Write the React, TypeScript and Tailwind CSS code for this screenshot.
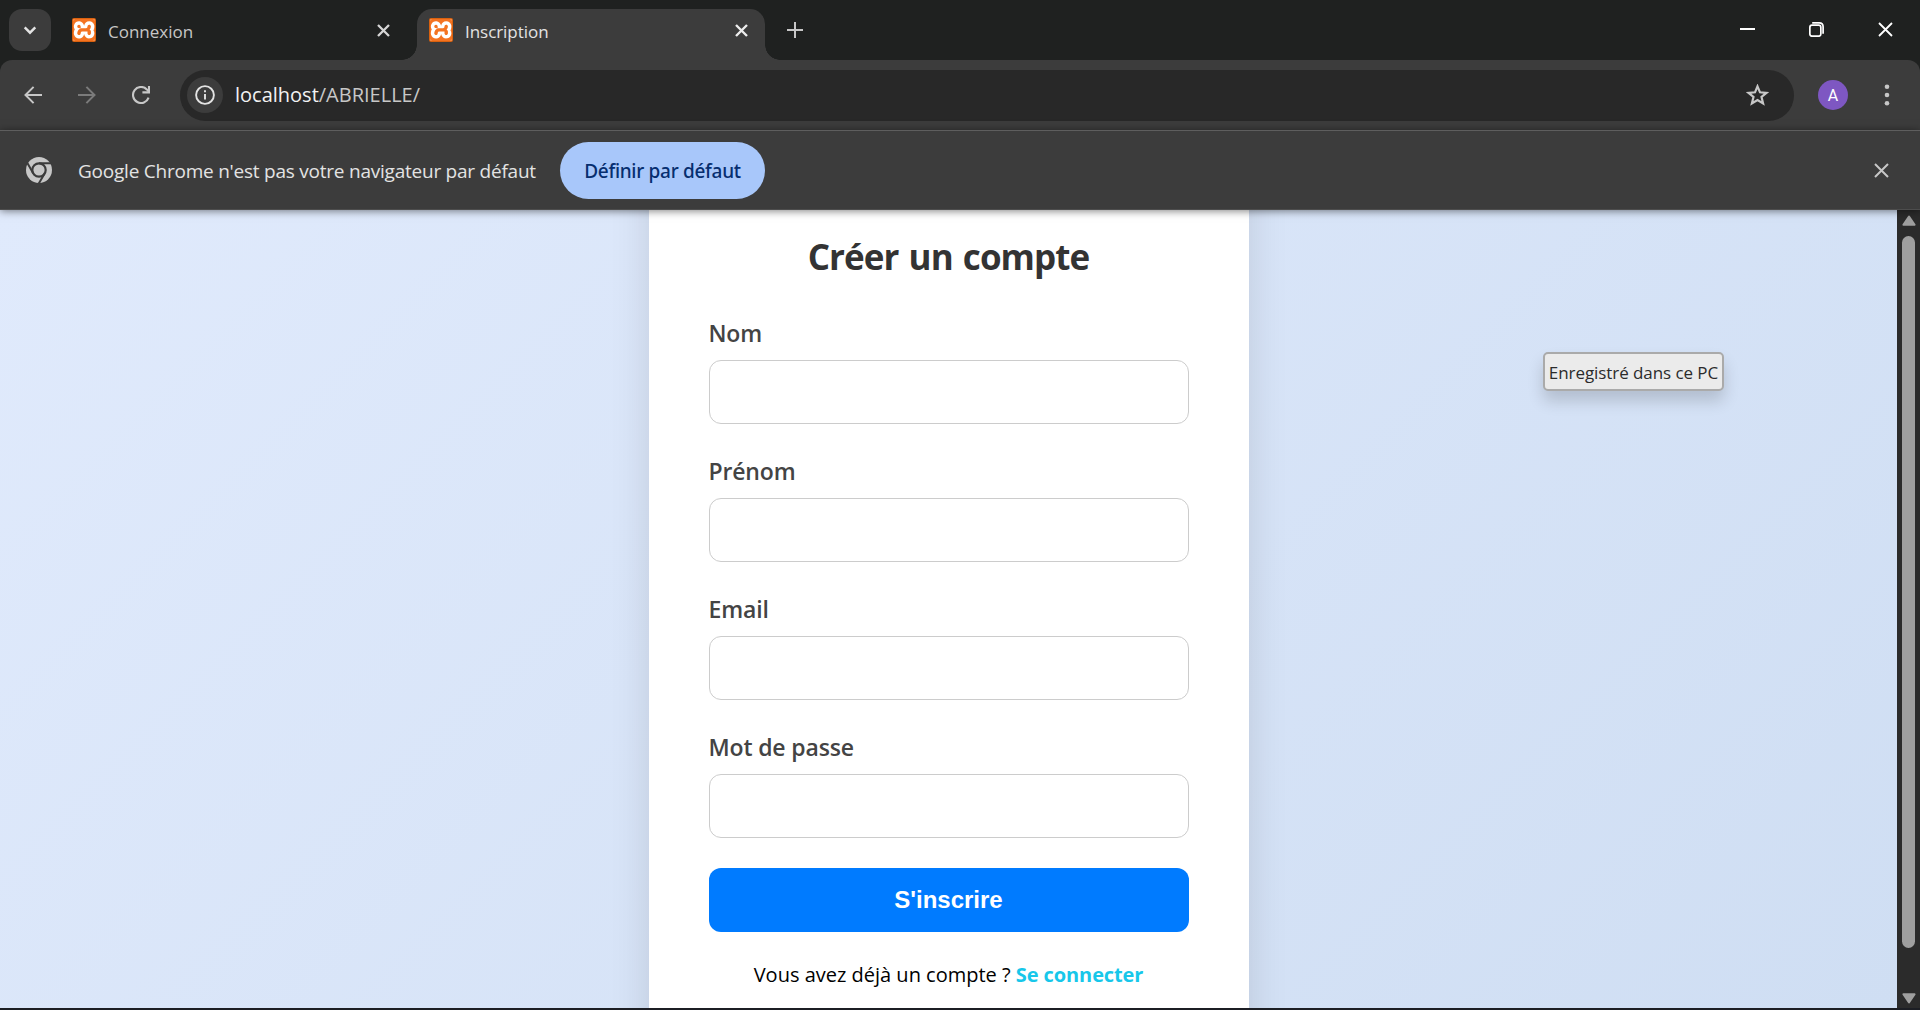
import type { ReactNode } from "react";
import { SiXampp } from "react-icons/si";

function XamppIcon() {
  return (
    <span className="flex size-[24px] shrink-0 items-center justify-center rounded-[2px] bg-[#d9610f] p-px">
      <span className="block size-[22px] overflow-hidden rounded-[2px] bg-white">
        <SiXampp className="block size-[22px] scale-[1.28] text-[#f47321]" />
      </span>
    </span>
  );
}

function Cross({ size, stroke, color }: { size: number; stroke: number; color: string }) {
  return (
    <svg width={size} height={size} viewBox={`0 0 ${size} ${size}`} className="shrink-0">
      <path d={`M1 1L${size - 1} ${size - 1}M${size - 1} 1L1 ${size - 1}`} stroke={color} strokeWidth={stroke} />
    </svg>
  );
}

function ChromeLogo() {
  return (
    <svg width="26" height="26" viewBox="0 0 26 26" className="shrink-0">
      <circle cx="13" cy="13" r="13" fill="#c7c7c7" />
      <circle cx="13" cy="13" r="6.7" fill="none" stroke="#3c3c3c" strokeWidth="2.2" />
      <path d="M13 6.3H25.5M7.2 16.35L1.2 5.8M18.8 16.35L12.6 26.8" stroke="#3c3c3c" strokeWidth="2" />
    </svg>
  );
}

function TabStrip() {
  return (
    <header className="flex h-[60px] bg-[#1f2120]">
      <button className="mt-[9px] ml-[9px] flex size-[42px] items-center justify-center rounded-[13px] bg-[#3c3c3c]">
        <svg width="14" height="9" viewBox="0 0 14 9">
          <path d="M1.7 1.4L7 6.7L12.3 1.4" fill="none" stroke="#e3e3e3" strokeWidth="2.4" />
        </svg>
      </button>
      <div className="ml-[21px] flex h-[60px] w-[330px] items-center pr-[12px]">
        <XamppIcon />
        <span className="mt-[3px] ml-[12px] flex-1 text-[17px] text-[#c7c7c7]">Connexion</span>
        <Cross size={13} stroke={2.3} color="#d6d6d6" />
      </div>
      <div className="flex h-[60px] items-end">
        <div className="size-[15px] bg-[radial-gradient(circle_at_0_0,transparent_14.5px,#3c3c3c_15px)]" />
        <div className="flex h-[51px] w-[348px] items-start rounded-t-[15px] bg-[#3c3c3c] pr-[17px] pl-[12px]">
          <div className="flex h-[42px] flex-1 items-center">
            <XamppIcon />
            <span className="mt-[3px] ml-[12px] flex-1 text-[17px] tracking-[-0.05px] text-[#e3e3e3]">Inscription</span>
            <Cross size={13} stroke={2.4} color="#ececec" />
          </div>
        </div>
        <div className="size-[15px] bg-[radial-gradient(circle_at_100%_0,transparent_14.5px,#3c3c3c_15px)]" />
      </div>
      <div className="ml-[7px] flex h-[60px] items-center">
        <svg width="16" height="16" viewBox="0 0 16 16">
          <path d="M8 0V16M0 8H16" stroke="#c7c7c7" strokeWidth="2" />
        </svg>
      </div>
      <div className="ml-auto flex h-[59px] items-center gap-[54px] pr-[27px]">
        <svg width="15" height="15" viewBox="0 0 15 15">
          <path d="M0 7H15" stroke="#fff" strokeWidth="2" />
        </svg>
        <svg width="15" height="15" viewBox="0 0 15 15" fill="none" stroke="#fff" strokeWidth="1.7">
          <rect x=".85" y="3.2" width="11" height="11" rx="2.2" />
          <path d="M3.2 .9H10.2Q14.1 .9 14.1 4.8V11.8" />
        </svg>
        <Cross size={15} stroke={1.8} color="#fff" />
      </div>
    </header>
  );
}

function Toolbar() {
  return (
    <div className="bg-[#1f2120]">
      <div className="flex h-[70px] items-center rounded-t-[12px] bg-[#3c3c3c] pl-[24px]">
        <svg width="18" height="18" viewBox="0 0 18 18" fill="none" stroke="#c7c7c7" strokeWidth="2">
          <path d="M18 9H1.6M9.6 .9L1.5 9L9.6 17.1" />
        </svg>
        <svg width="18" height="18" viewBox="0 0 18 18" fill="none" stroke="#7b7b7b" strokeWidth="2" className="ml-[36px]">
          <path d="M0 9H16.4M8.4 .9L16.5 9L8.4 17.1" />
        </svg>
        <svg width="18" height="18" viewBox="0 0 18 18" fill="none" stroke="#c7c7c7" strokeWidth="2.1" className="ml-[36px]">
          <path d="M16.6 11.6A8 8 0 1 1 14.8 3.4L16.6 5.4" />
          <path d="M17 0V6.4H10.4" />
        </svg>
        <div className="ml-[30px] flex h-[51px] w-[1614px] items-center rounded-full bg-[#282828] pr-[25px] pl-[7px]">
          <span className="flex size-[36px] items-center justify-center rounded-full bg-[#3c3c3c]">
            <svg width="20" height="20" viewBox="0 0 20 20">
              <circle cx="10" cy="10" r="8.9" fill="none" stroke="#e3e3e3" strokeWidth="1.9" />
              <path d="M10 8.9V14.6M10 5.2V7.2" stroke="#e3e3e3" strokeWidth="1.9" />
            </svg>
          </span>
          <p className="-mt-px ml-[12px] flex-1 text-[20px] leading-[30px] text-[#c7c7c7]">
            <span className="text-[#f2f2f2]">localhost</span>/ABRIELLE/
          </p>
          <svg width="23" height="22" viewBox="0 0 23 22" fill="none" stroke="#c7c7c7" strokeWidth="2.2">
            <path d="M11.5 2.3L14 8.3L20.5 8.8L15.5 13L17.1 19.4L11.5 16L5.9 19.4L7.5 13L2.5 8.8L9 8.3Z" />
          </svg>
        </div>
        <span className="ml-[24px] flex size-[30px] items-center justify-center rounded-full bg-[#7e57c2] pt-px font-['Roboto'] text-[16px] text-white">
          A
        </span>
        <svg width="6" height="24" viewBox="0 0 6 24" fill="#c7c7c7" className="ml-[36px]">
          <circle cx="3" cy="3.7" r="2.3" />
          <circle cx="3" cy="12" r="2.3" />
          <circle cx="3" cy="20.3" r="2.3" />
        </svg>
      </div>
    </div>
  );
}

function DefaultBrowserBar() {
  return (
    <div className="relative z-10 flex h-[80px] items-center border-t border-b border-t-[#5e5e5e] border-b-[#4d4d4d] bg-[#3c3c3c] pr-[31px] pl-[26px] shadow-[0_1px_8px_rgba(0,0,0,0.5)]">
      <ChromeLogo />
      <span className="mt-[2px] ml-[26px] w-[482px] text-[19px] tracking-[-0.23px] whitespace-nowrap text-[#e3e3e3]">
        Google Chrome n'est pas votre navigateur par défaut
      </span>
      <button className="mt-px h-[57px] w-[205px] rounded-full bg-[#a8c7fa] pt-[2px] font-['Noto_Sans'] text-[19px] font-medium tracking-[-0.3px] text-[#062e6f]">
        Définir par défaut
      </button>
      <span className="ml-auto">
        <Cross size={15} stroke={2} color="#c7c7c7" />
      </span>
    </div>
  );
}

function Field({ label, type }: { label: string; type: string }) {
  return (
    <label className="block">
      <span className="block h-[30px] text-[23px] leading-[30px] font-semibold tracking-[-0.15px] text-[#444]">{label}</span>
      <input type={type} className="mt-[12px] block h-[64px] w-full rounded-[12px] border border-[#ccc] bg-white px-[18px]" />
    </label>
  );
}

function SignupCard({ children }: { children: ReactNode }) {
  return (
    <main className="-mt-[60px] h-[918px] w-[600px] bg-white px-[60px] pt-[83px] shadow-[0_12px_38px_rgba(0,0,0,0.12)]">
      {children}
    </main>
  );
}

function Scrollbar() {
  return (
    <div className="flex w-[23px] flex-col items-center bg-[#2b2b2b] pt-[5px] pb-[4px]">
      <svg width="14" height="11" viewBox="0 0 14 11">
        <path d="M7 1.5L12.6 9.7H1.4Z" fill="#9f9f9f" stroke="#9f9f9f" strokeWidth="2" strokeLinejoin="round" />
      </svg>
      <div className="mt-[10px] h-[712px] w-[13px] rounded-full bg-[#9f9f9f]" />
      <svg width="14" height="11" viewBox="0 0 14 11" className="mt-auto">
        <path d="M7 9.5L12.6 1.3H1.4Z" fill="#9f9f9f" stroke="#9f9f9f" strokeWidth="2" strokeLinejoin="round" />
      </svg>
    </div>
  );
}

export default function App() {
  return (
    <div className="flex h-[1010px] w-[1920px] flex-col overflow-hidden bg-[#1c1e24] font-['Open_Sans','Noto_Sans',sans-serif]">
      <TabStrip />
      <Toolbar />
      <DefaultBrowserBar />
      <div className="flex h-[798px]">
        <div className="relative flex w-[1897px] justify-center overflow-hidden bg-[linear-gradient(135deg,#e0eafc,#cfdef3)]">
          <SignupCard>
            <h1 className="text-center text-[35px] leading-[48px] font-bold tracking-[-0.95px] text-[#333] [word-spacing:2px]">
              Créer un compte
            </h1>
            <form className="mt-[37px] flex flex-col gap-[32px]">
              <Field label="Nom" type="text" />
              <Field label="Prénom" type="text" />
              <Field label="Email" type="email" />
              <Field label="Mot de passe" type="password" />
              <button
                type="button"
                className="-mt-[2px] h-[64px] rounded-[12px] bg-[#007bff] font-['Liberation_Sans'] text-[24px] font-bold text-white"
              >
                S'inscrire
              </button>
            </form>
            <p className="mt-[28px] text-center text-[20px] leading-[30px] whitespace-nowrap text-black">
              Vous avez déjà un compte ? <a className="font-bold tracking-[-0.1px] text-[#17c7ea]">Se connecter</a>
            </p>
          </SignupCard>
          <div className="absolute top-[142px] left-[1543px] flex h-[39px] w-[181px] items-center justify-center rounded-[5px] border-2 border-[#aaa] bg-[#ebebeb] pt-[2px] text-[17px] tracking-[-0.07px] whitespace-nowrap text-[#2b2b2b] shadow-[0_10px_16px_rgba(0,0,0,0.16)]">
            Enregistré dans ce PC
          </div>
        </div>
        <Scrollbar />
      </div>
    </div>
  );
}
